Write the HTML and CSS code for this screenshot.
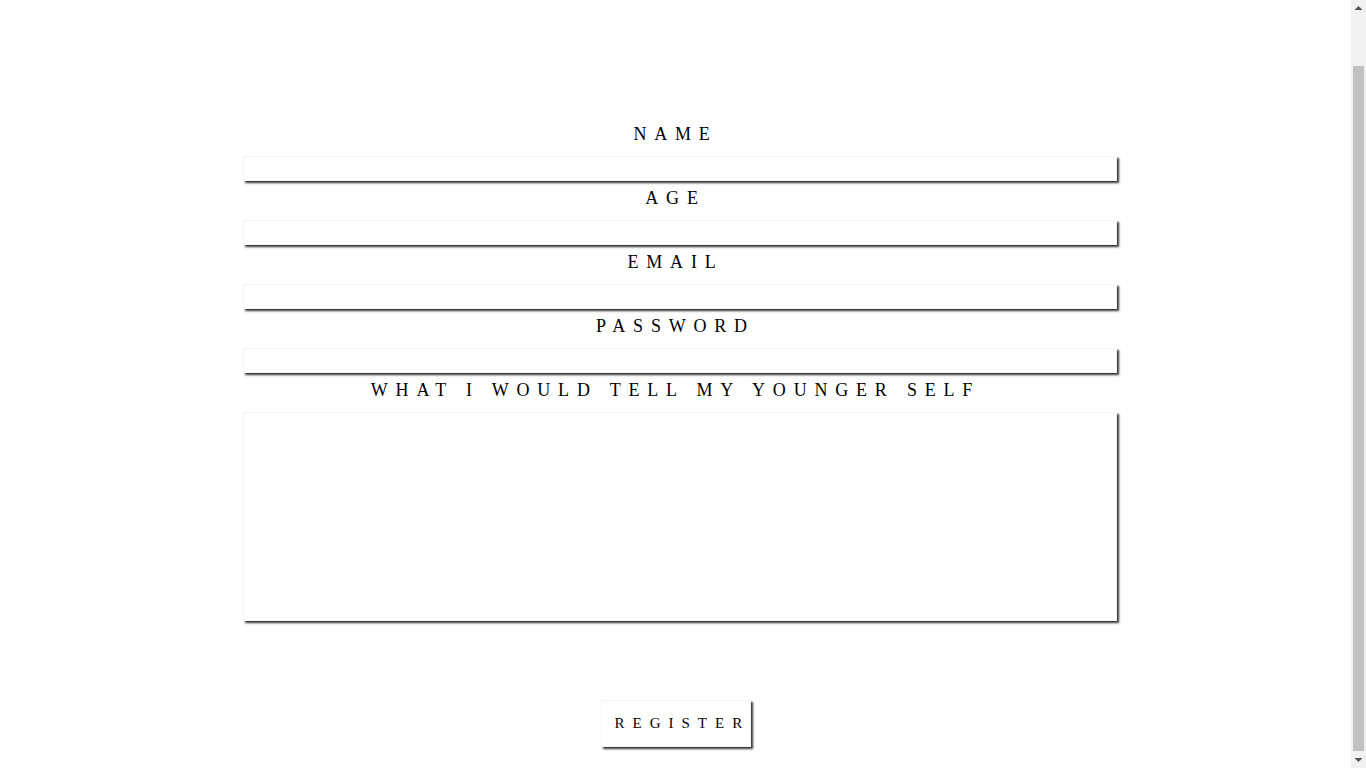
FILE: index.html
```html
<!DOCTYPE html>
<html lang="en">
<head>
<meta charset="utf-8">
<title>Register</title>
<link rel="stylesheet" href="styles.css">
</head>
<body>
<div class="window">
  <main class="content">
    <form class="form">
      <div class="field">
        <label class="label" for="name">Name</label>
        <input class="input" id="name" type="text">
      </div>
      <div class="field">
        <label class="label" for="age">Age</label>
        <input class="input" id="age" type="text">
      </div>
      <div class="field">
        <label class="label" for="email">Email</label>
        <input class="input" id="email" type="email">
      </div>
      <div class="field">
        <label class="label" for="password">Password</label>
        <input class="input" id="password" type="password">
      </div>
      <div class="field">
        <label class="label" for="advice">What I would tell my younger self</label>
        <textarea class="textarea" id="advice"></textarea>
      </div>
      <div class="actions">
        <button class="button" type="button">Register</button>
      </div>
    </form>
  </main>
  <div class="scrollbar" aria-hidden="true">
    <div class="scroll-btn">
      <svg width="15" height="17" viewBox="0 0 15 17"><path d="M3.5 10h8L7.5 6z" fill="#505050"/></svg>
    </div>
    <div class="scroll-track">
      <div class="scroll-thumb"></div>
    </div>
    <div class="scroll-btn">
      <svg width="15" height="17" viewBox="0 0 15 17"><path d="M3.5 7h8L7.5 11z" fill="#505050"/></svg>
    </div>
  </div>
</div>
</body>
</html>
```

FILE: styles.css
```css
html, body {
  margin: 0;
  padding: 0;
  height: 100%;
  overflow: hidden;
  background: #fff;
}

body {
  font-family: "Liberation Serif", "DejaVu Serif", serif;
  color: #000;
}

.window {
  display: flex;
  height: 100vh;
}

.content {
  flex: 1;
  min-width: 0;
}

.scrollbar {
  width: 15px;
  flex: none;
  display: flex;
  flex-direction: column;
  background: #f1f1f1;
}

.scroll-btn {
  height: 17px;
  flex: none;
}

.scroll-btn svg {
  display: block;
}

.scroll-track {
  flex: 1;
  display: flex;
  flex-direction: column;
  justify-content: flex-end;
  padding: 0 2px;
}

.scroll-thumb {
  height: 685px;
  background: #c1c1c1;
}

.form {
  padding-top: 123px;
  display: flex;
  flex-direction: column;
}

.field {
  display: flex;
  flex-direction: column;
}

.label {
  display: block;
  text-align: center;
  text-transform: uppercase;
  font-size: 18px;
  line-height: 22px;
  letter-spacing: 7.8px;
  margin-bottom: 11px;
}

.input,
.textarea {
  box-sizing: border-box;
  display: block;
  margin-left: 243px;
  width: 874px;
  border: 1px solid #f3f3f3;
  background: #fff;
  box-shadow: 2px 2px 2px #333;
  padding: 0;
  outline: none;
}

.input {
  height: 25px;
  margin-bottom: 6px;
}

.textarea {
  height: 209px;
  resize: none;
}

.actions {
  display: flex;
  justify-content: center;
  margin-top: 79px;
}

.button {
  box-sizing: border-box;
  width: 150px;
  height: 47px;
  padding: 0 0 0 13px;
  text-align: left;
  white-space: nowrap;
  background: #fff;
  border: 1px solid #f3f3f3;
  box-shadow: 2px 2px 2px #333;
  font-family: "Liberation Serif", "DejaVu Serif", serif;
  font-size: 15px;
  text-transform: uppercase;
  letter-spacing: 8px;
  color: #000;
  cursor: pointer;
}
```
